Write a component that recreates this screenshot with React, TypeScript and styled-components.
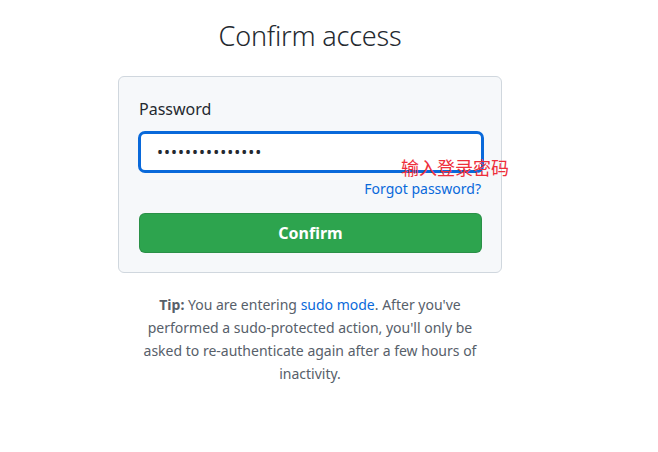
import React from 'react';
import styled, { createGlobalStyle } from 'styled-components';

const GlobalStyle = createGlobalStyle`
  html, body {
    margin: 0;
    padding: 0;
    background: #ffffff;
    font-family: "Noto Sans", "Noto Sans CJK SC", sans-serif;
    color: #24292f;
  }
`;

const Page = styled.div`
  width: 384px;
  margin-left: 118px;
  padding-top: 16px;
`;

const Title = styled.h1`
  margin: 0 0 20px;
  text-align: center;
  font-size: 27px;
  font-weight: 300;
  line-height: 40px;
  letter-spacing: -0.2px;
  color: #24292f;
`;

const Card = styled.div`
  position: relative;
  background: #f6f8fa;
  border: 1px solid #d0d7de;
  border-radius: 6px;
  padding: 20px 20px 19px;
`;

const Label = styled.label`
  display: block;
  font-size: 16px;
  line-height: 24px;
  margin-bottom: 10px;
  color: #24292f;
`;

const Input = styled.input`
  box-sizing: border-box;
  width: 346px;
  height: 42px;
  margin-left: -1px;
  padding: 0 16px;
  border: 3px solid #0969da;
  border-radius: 7px;
  background: #ffffff;
  font-size: 16px;
  letter-spacing: 1px;
  color: #24292f;
  outline: none;
  font-family: "Noto Sans", sans-serif;
`;

const ForgotRow = styled.div`
  display: flex;
  justify-content: flex-end;
  margin-top: 5px;
  line-height: 22px;
`;

const Link = styled.a`
  color: #0969da;
  text-decoration: none;
  font-size: 14px;
`;

const Annotation = styled.span`
  position: absolute;
  left: 282px;
  top: 78px;
  white-space: nowrap;
  font-size: 18px;
  line-height: 24px;
  color: #ee2f3b;
  font-family: "Noto Sans CJK SC", sans-serif;
  pointer-events: none;
`;

const ConfirmButton = styled.button`
  display: block;
  width: 343px;
  height: 40px;
  margin-top: 13px;
  border: 1px solid rgba(27, 31, 36, 0.15);
  border-radius: 6px;
  background: #2da44e;
  color: #ffffff;
  font-family: "Noto Sans", sans-serif;
  font-size: 16px;
  font-weight: 700;
  cursor: pointer;
`;

const Tip = styled.p`
  width: 340px;
  margin: 20px auto 0;
  text-align: center;
  font-size: 14px;
  line-height: 23px;
  color: #57606a;

  strong {
    font-weight: 700;
  }
`;

const App: React.FC = () => {
  return (
    <>
      <GlobalStyle />
      <Page>
        <Title>Confirm access</Title>
        <Card>
          <Label htmlFor="password">Password</Label>
          <Input id="password" type="password" defaultValue="abcdefghijklmno" autoFocus />
          <ForgotRow>
            <Link href="#">Forgot password?</Link>
          </ForgotRow>
          <ConfirmButton>Confirm</ConfirmButton>
          <Annotation>输入登录密码</Annotation>
        </Card>
        <Tip>
          <strong>Tip:</strong> You are entering <Link href="#">sudo mode</Link>. After you've
          performed a sudo-protected action, you'll only be asked to re-authenticate again after a
          few hours of inactivity.
        </Tip>
      </Page>
    </>
  );
};

export default App;
